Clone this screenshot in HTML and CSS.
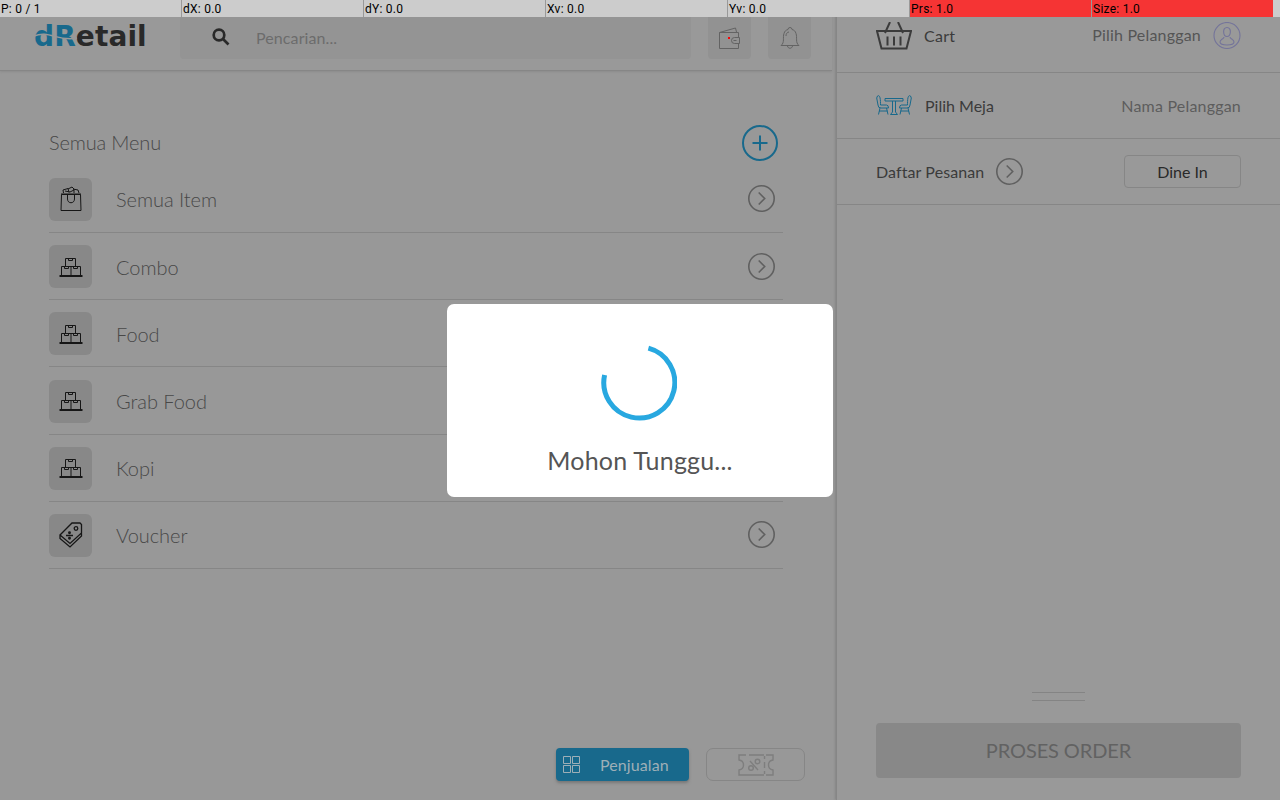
FILE: index.html
```html
<!DOCTYPE html>
<html lang="id">
<head>
<meta charset="utf-8">
<title>dRetail</title>
<link rel="stylesheet" href="styles.css">
</head>
<body>
<svg class="defs" width="0" height="0">
  <defs>
    <symbol id="chevron" viewBox="0 0 28 28"><circle cx="13.500" cy="13.500" r="12.700"/><path d="M10.700 7.500l6 6-6 6"/></symbol>
    <symbol id="boxes" viewBox="0 0 24 20"><path d="M.5 18.500h23M.5 19.500h23M2.500 18V9.500h19V18M12 9.500V18M6.500 9V1.500h10V9M9.500 1.500v2h4v-2M5.500 9.500v2h4v-2M14.500 9.500v2h4v-2"/></symbol>
  </defs>
</svg>
<div class="app">
  <main class="catalog">
    <header class="topbar">
      <div class="logo"><span class="logo-blue">dR</span><span>etail</span><svg viewBox="0 0 44 14"><path d="M0 5C15-1 24 11 43 7"/></svg></div>
      <div class="search">
        <svg class="search-icon" viewBox="0 0 18 18"><circle cx="7" cy="7" r="5.300"/><path d="M11 11l5.500 5.500"/></svg>
        <span>Pencarian...</span>
      </div>
      <div class="tool"><svg width="24" height="24" viewBox="0 0 24 24"><path d="M1.500 6.500h19v5M20.500 17.500v5h-19v-16l16-4.500 1 4M21.500 11.500h-5a3 3 0 000 6h5zM15.500 14.500h3"/><path class="dot" d="M10 11h2v2h-2z"/></svg></div>
      <div class="tool"><svg width="22" height="24" viewBox="0 0 22 24"><path d="M2 19.500c4-3 1.500-8 3-12 .7-2.500 2-3.500 4-4a2 2 0 014 0c2 .5 3.300 1.500 4 4 1.500 4-1 9 3 12zM8.500 20c.5 3 4.500 3 5 0M7 10c0-2 1-4 3-4"/></svg></div>
    </header>
    <section class="menu">
      <div class="menu-head"><h1>Semua Menu</h1>
        <svg class="plus" width="36" height="36" viewBox="0 0 36 36"><circle cx="18" cy="18" r="17"/><path d="M10.500 18h15M18 10.500v15"/></svg></div>
      <ul>
        <li><span class="tile"><svg width="22" height="26" viewBox="0 0 22 26"><path d="M1.500 8.500h19l.5 16H1zM1 8h20M3.500 7l-.500-3 5-1.500 1 4M8 3l4-2 2 2v4M13 3l5 1 1 3M5 5l5 1 4-2M7.500 9v4c0 5 7 5 7 0V9"/></svg></span><span>Semua Item</span><svg class="go"><use href="#chevron"/></svg></li>
        <li><span class="tile"><svg width="24" height="20"><use href="#boxes"/></svg></span><span>Combo</span><svg class="go"><use href="#chevron"/></svg></li>
        <li><span class="tile"><svg width="24" height="20"><use href="#boxes"/></svg></span><span>Food</span><svg class="go"><use href="#chevron"/></svg></li>
        <li><span class="tile"><svg width="24" height="20"><use href="#boxes"/></svg></span><span>Grab Food</span><svg class="go"><use href="#chevron"/></svg></li>
        <li><span class="tile"><svg width="24" height="20"><use href="#boxes"/></svg></span><span>Kopi</span><svg class="go"><use href="#chevron"/></svg></li>
        <li><span class="tile"><svg class="tag" width="24" height="26" viewBox="0 0 24 26"><path d="M13 1h8l1.500 1.500V11L11 21.500 1 13zM1 13v3.500l10 8.500 11.500-11v-3M7 13.500h7"/><circle cx="17" cy="6.500" r="1.800"/><circle cx="10.500" cy="10.700" r=".8"/><circle cx="10.500" cy="16.200" r=".8"/></svg></span><span>Voucher</span><svg class="go"><use href="#chevron"/></svg></li>
      </ul>
    </section>
    <footer class="modes">
      <div class="mode-sale"><svg width="18" height="18" viewBox="0 0 18 18"><path d="M.5.500h7v7h-7zM9.500.500h7v7h-7zM.5 9.500h7v7h-7zM9.500 9.500h7v7h-7z"/></svg><span>Penjualan</span></div>
      <div class="mode-promo"><svg width="36" height="22" viewBox="0 0 36 22"><path d="M8 1H1v5c6 1 6 9 0 10v5h25M11 1h15M28 1h7v5c-6 1-6 9 0 10v5h-7M26.500 2v3M26.500 8v6M26.500 17v3M12 7l8 9"/><circle cx="19.500" cy="7.500" r="2.300"/><circle cx="13" cy="14" r="2.300"/></svg></div>
    </footer>
  </main>
  <aside class="cart">
    <div class="cart-head">
      <svg class="basket" width="36" height="28" viewBox="0 0 36 28"><path d="M1 9h34l-4.500 17.500h-25zM9 11l5-11M27 11L22 0M11.500 14.500v9M18 14.500v9M24.500 14.500v9"/></svg>
      <span class="cart-title">Cart</span><span class="customer">Pilih Pelanggan</span>
      <svg class="user" width="28" height="28" viewBox="0 0 28 28"><circle cx="14" cy="13.500" r="13"/><path d="M14 5.500c-5 0-4 9 0 9s5-9 0-9zM11 15c0 2-4 2-4 5 0 4 14 4 14 0 0-3-4-3-4-5"/></svg>
    </div>
    <div class="cart-table">
      <svg width="36" height="21" viewBox="0 0 36 21"><path d="M1.500 1c3-2 3 5 3 9h6q2 0 2 3H5q-3 0-3-3L.7 3zM34.500 1c-3-2-3 5-3 9h-6q-2 0-2 3H31q3 0 3-3l1.300-7zM4 13l-1.500 6.500M10.500 13l1.500 6.500M3 16h8.500M32 13l1.500 6.500M25.500 13L24 19.500M33 16h-8.500M9 3.500h18v2.500H9zM16.500 6v11l-2 2.500h7l-2-2.500V6"/></svg>
      <span class="table-name">Pilih Meja</span><span class="name">Nama Pelanggan</span>
    </div>
    <div class="cart-orders"><span class="orders">Daftar Pesanan</span><svg class="go"><use href="#chevron"/></svg><span class="dine">Dine In</span></div>
    <div class="items"></div>
    <div class="handle"></div>
    <div class="process"><span>PROSES ORDER</span></div>
  </aside>
</div>
<div class="modal"><svg width="76" height="76" viewBox="0 0 76 76"><path d="M47.400 3.200A35.500 35.500 0 1 1 3.600 30"/></svg><span>Mohon Tunggu...</span></div>
<div class="debug"><span>P: 0 / 1</span><span>dX: 0.0</span><span>dY: 0.0</span><span>Xv: 0.0</span><span>Yv: 0.0</span><span class="hot">Prs: 1.0</span><span class="hot">Size: 1.0</span></div>
</body>
</html>
```
FILE: styles.css
```css
* { box-sizing: border-box; }
body { margin: 0; width: 1280px; height: 800px; overflow: hidden; position: relative; background: #989898; color: #484848; font-family: Lato, "Open Sans", sans-serif; }
svg { fill: none; stroke: currentColor; flex: none; display: block; }
.defs { position: absolute; }
ul, h1 { margin: 0; padding: 0; list-style: none; font-weight: 300; }
.app { display: flex; height: 800px; }
.catalog { width: 836px; display: flex; flex-direction: column; }
.topbar { width: 832px; height: 71px; padding: 17px 21px 12px 34px; display: flex; background: #999; border-bottom: 1px solid #868686; box-shadow: 0 1px 2px #8c8c8c; }
.logo { position: relative; width: 146px; height: 41px; color: #292929; font: bold 28px/40px "DejaVu Sans", sans-serif; letter-spacing: .1px; }
.logo-blue { color: #18698c; }
.logo svg { position: absolute; left: 0; top: 14px; width: 44px; height: 14px; stroke: #999; stroke-width: 1.5; }
.search { width: 511px; height: 42px; background: #949494; border-radius: 0 0 4px 4px; display: flex; align-items: center; padding: 0 0 2px 32px; font-size: 16px; letter-spacing: .1px; color: #6c6c6c; }
.search-icon { width: 18px; height: 18px; margin-right: 26px; color: #292929; stroke-width: 2.7; }
.tool { width: 43px; height: 42px; margin-left: 17px; border-radius: 0 0 4px 4px; background: #929292; display: flex; align-items: center; justify-content: center; color: #636363; }
.dot { fill: red; stroke: none; }
.menu { padding: 54px 52px 0 49px; font-size: 20px; flex: 1; font-weight: 300; letter-spacing: -.05px; }
.menu-head { display: flex; justify-content: space-between; align-items: center; height: 36px; padding-right: 6px; }
.menu-head h1 { font-size: 20px; padding-bottom: 2px; letter-spacing: -.15px; }
.plus { color: #18698c; stroke-width: 2; }
.menu ul { padding-top: 4.900px; width: 734px; }
.menu li { display: flex; height: 67.200px; align-items: center; border-bottom: 1px solid #868686; padding: 1px 7px 0 0; }
.tile { width: 43px; height: 43px; border-radius: 6px; background: #888; color: #161616; display: flex; align-items: center; justify-content: center; margin-right: 24px; }
.tag { stroke-width: 1.3; }
.go { width: 28px; height: 28px; color: #606060; stroke-width: 1.6; }
.menu .go { margin-left: auto; }
.modes { height: 52px; display: flex; padding-left: 556px; gap: 17px; }
.mode-sale { width: 133px; height: 33px; border-radius: 4px; background: #18698c; color: #9eafb7; display: flex; align-items: center; padding-left: 7px; gap: 19px; font-size: 16px; letter-spacing: .1px; box-shadow: 0 2px 3px #777; }
.mode-promo { width: 99px; height: 33px; border: 1px solid #868686; border-radius: 7px; display: flex; align-items: center; justify-content: center; color: #7e7e7e; }
.mode-promo svg { stroke-width: 1.4; }
.cart { width: 444px; border-left: 1px solid #868686; box-shadow: -1px 0 2px #858585; background: #999; display: flex; flex-direction: column; color: #3b3b3b; font-size: 16px; }
.cart-head, .cart-table, .cart-orders { border-bottom: 1px solid #868686; display: flex; align-items: center; padding: 0 39px; }
.cart-head { height: 73px; }
.cart-head .basket { stroke-width: 2; margin-right: 12px; }
.cart-title { padding-bottom: 2px; letter-spacing: .3px; }
.customer { margin-left: auto; margin-right: 12px; padding-bottom: 4px; letter-spacing: .2px; color: #555; }
.cart-head .user { color: #74749a; stroke-width: 1.1; }
.cart-table { height: 66px; }
.cart-table svg { color: #18698c; margin-right: 13px; }
.name { margin-left: auto; letter-spacing: .2px; color: #5d5d5d; }
.orders { letter-spacing: .1px; }
.cart-orders { height: 66px; }
.cart-orders .go { margin-left: 12px; }
.dine { width: 117px; height: 33px; border: 1px solid #868686; border-radius: 4px; margin-left: auto; display: flex; align-items: center; justify-content: center; color: #292929; }
.items { flex: 1; }
.handle { width: 53px; height: 9px; border: solid #848484; border-width: 1px 0; margin: 0 0 22px 195px; }
.process { margin: 0 39px 22px; padding-bottom: 1px; height: 55px; border-radius: 4px; background: #888; color: #626262; display: flex; align-items: center; justify-content: center; font-size: 20px; letter-spacing: -.1px; }
.modal { position: absolute; left: 447px; top: 304px; width: 386px; height: 193px; border-radius: 7px; background: #fff; display: flex; flex-direction: column; align-items: center; padding-top: 41px; color: #555; font-size: 25px; line-height: 30px; letter-spacing: .2px; }
.modal svg { stroke: #28a8e0; stroke-width: 5; margin-bottom: 24px; transform: translateX(-1px); }
.debug { position: absolute; left: 0; top: 0; width: 1280px; height: 17px; background: #ccc; display: flex; font: 12px/18px Roboto, sans-serif; letter-spacing: .25px; color: #000; }
.debug span { width: 182px; padding-left: 1px; border-left: 1px solid #999; }
.debug span:first-child { width: 181px; border: 0; }
.debug .hot { background: #f53434; }
```
